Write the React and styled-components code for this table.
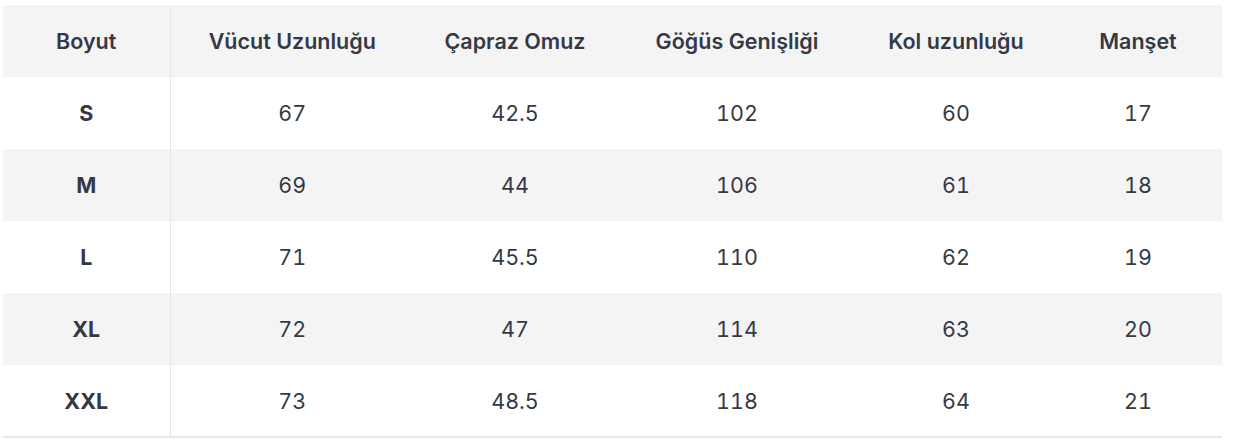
import React from 'react';
import styled, { createGlobalStyle } from 'styled-components';

const GlobalStyle = createGlobalStyle`
  body {
    margin: 0;
    background: #fff;
    font-family: Inter, "Noto Sans", sans-serif;
  }
`;

const Wrapper = styled.div`
  padding: 5px 12px 0 3px;
`;

const Table = styled.table`
  width: 1219px;
  border-collapse: collapse;
  table-layout: fixed;
  color: #343945;
  border-bottom: 2px solid #e8e8e8;
`;

const Row = styled.tr`
  height: 72px;
  background: ${(p) => (p.$shaded ? '#f4f4f4' : '#fff')};
`;

const HeadCell = styled.th`
  font-size: 21.5px;
  font-weight: 600;
  text-align: center;
  padding: 0;
  border-right: ${(p) => (p.$divided ? '1px solid #e6e6e6' : 'none')};
`;

const SizeCell = styled.td`
  font-size: 21.5px;
  font-weight: 700;
  text-align: center;
  padding: 0;
  border-right: 1px solid #e6e6e6;
`;

const ValueCell = styled.td`
  font-size: 21.5px;
  font-weight: 400;
  font-variant-numeric: tabular-nums;
  text-align: center;
  padding: 0;
`;

const columns = [167, 244, 202, 242, 196, 168];
const headers = ['Boyut', 'Vücut Uzunluğu', 'Çapraz Omuz', 'Göğüs Genişliği', 'Kol uzunluğu', 'Manşet'];

const rows = [
  ['S', '67', '42.5', '102', '60', '17'],
  ['M', '69', '44', '106', '61', '18'],
  ['L', '71', '45.5', '110', '62', '19'],
  ['XL', '72', '47', '114', '63', '20'],
  ['XXL', '73', '48.5', '118', '64', '21'],
];

const App = () => {
  return (
    <>
      <GlobalStyle />
      <Wrapper>
        <Table>
          <colgroup>
            {columns.map((w, i) => (
              <col key={i} style={{ width: w }} />
            ))}
          </colgroup>
          <thead>
            <Row $shaded>
              {headers.map((h, i) => (
                <HeadCell key={h} $divided={i === 0}>{h}</HeadCell>
              ))}
            </Row>
          </thead>
          <tbody>
            {rows.map((r, ri) => (
              <Row key={r[0]} $shaded={ri % 2 === 1}>
                <SizeCell>{r[0]}</SizeCell>
                {r.slice(1).map((v, i) => (
                  <ValueCell key={i}>{v}</ValueCell>
                ))}
              </Row>
            ))}
          </tbody>
        </Table>
      </Wrapper>
    </>
  );
};

export default App;
